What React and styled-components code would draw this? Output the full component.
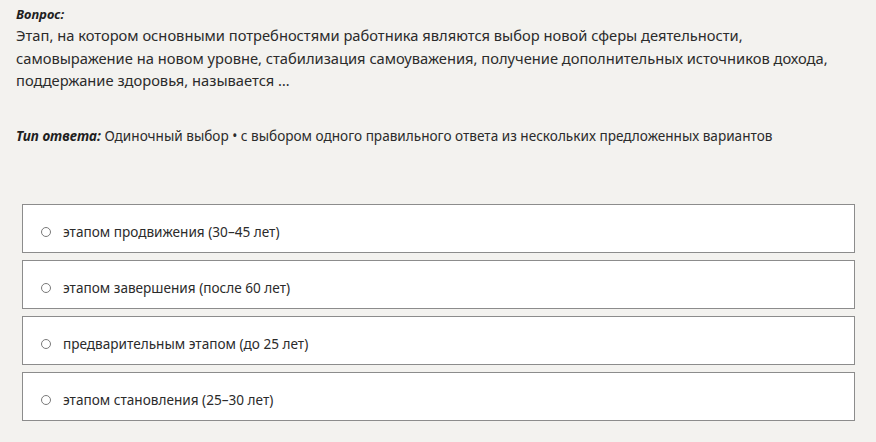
import React from "react";
import styled, { createGlobalStyle } from "styled-components";

const GlobalStyle = createGlobalStyle`
  html, body {
    margin: 0;
    padding: 0;
    background: #f3f2ef;
  }
  body {
    font-family: "Noto Sans", "Open Sans", sans-serif;
    color: #2b2b2b;
  }
`;

const Page = styled.div`
  padding: 4px 21px 0 16px;
`;

const Label = styled.div`
  font-size: 13px;
  line-height: 20px;
  font-weight: 700;
  font-style: italic;
  color: #1f1f1f;
`;

const QuestionText = styled.p`
  margin: 0;
  font-size: 14.7px;
  line-height: 22.5px;
  color: #2b2b2b;
`;

const TypeLine = styled.div`
  margin-top: 34px;
  font-size: 13.6px;
  line-height: 20px;
  color: #2b2b2b;

  b {
    font-weight: 700;
    font-style: italic;
    color: #1f1f1f;
  }
`;

const Options = styled.div`
  display: flex;
  flex-direction: column;
  gap: 7px;
  margin-top: 58px;
  padding-left: 6px;
`;

const Option = styled.label`
  display: flex;
  align-items: center;
  gap: 12px;
  height: 49px;
  box-sizing: border-box;
  padding: 7px 0 0 18px;
  background: #fff;
  border: 1px solid #8c8c8c;
  font-size: 13.6px;
  color: #2b2b2b;
  cursor: pointer;
`;

const Radio = styled.span`
  width: 10px;
  height: 10px;
  box-sizing: border-box;
  border-radius: 50%;
  border: 1px solid #7a7a7a;
  background: #fff;
  flex-shrink: 0;
`;

const answers = [
  "этапом продвижения (30–45 лет)",
  "этапом завершения (после 60 лет)",
  "предварительным этапом (до 25 лет)",
  "этапом становления (25–30 лет)",
];

export default function App() {
  return (
    <Page>
      <GlobalStyle />
      <Label>Вопрос:</Label>
      <QuestionText>
        Этап, на котором основными потребностями работника являются выбор новой сферы деятельности,
        самовыражение на новом уровне, стабилизация самоуважения, получение дополнительных источников дохода,
        поддержание здоровья, называется …
      </QuestionText>
      <TypeLine>
        <b>Тип ответа:</b> Одиночный выбор • с выбором одного правильного ответа из нескольких предложенных вариантов
      </TypeLine>
      <Options>
        {answers.map((a) => (
          <Option key={a}>
            <Radio />
            {a}
          </Option>
        ))}
      </Options>
    </Page>
  );
}
